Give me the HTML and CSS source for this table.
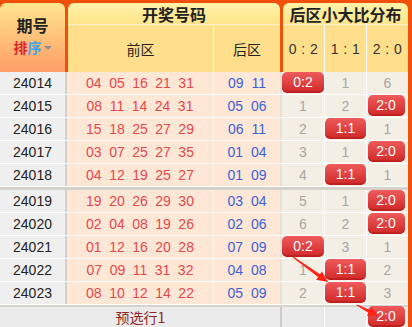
FILE: index.html
```html
<!DOCTYPE html>
<html lang="zh-CN">
<head>
<meta charset="utf-8">
<title>后区小大比分布</title>
<link rel="stylesheet" href="styles.css">
</head>
<body>
<div class="board">
  <div class="head">
    <div class="h-issue">
      <div class="h-issue-t">期号</div>
      <div class="sort"><span class="s1">排</span><span class="s2">序</span><span class="caret"></span></div>
    </div>
    <div class="h-group h-draw">
      <div class="h-title">开奖号码</div>
      <div class="h-sub"><div class="hs hs-front">前区</div><div class="hs hs-back">后区</div></div>
    </div>
    <div class="h-group h-dist">
      <div class="h-title">后区小大比分布</div>
      <div class="h-sub"><div class="hs hs-r">0 : 2</div><div class="hs hs-r">1 : 1</div><div class="hs hs-r last">2 : 0</div></div>
    </div>
  </div>

  <div class="row">
    <div class="c c-issue">24014</div>
    <div class="c c-front"><span>04</span><span>05</span><span>16</span><span>21</span><span>31</span></div>
    <div class="c c-back"><span>09</span><span>11</span></div>
    <div class="c c-r"><span class="badge">0:2</span></div>
    <div class="c c-r">1</div>
    <div class="c c-r last">6</div>
  </div>
  <div class="row">
    <div class="c c-issue">24015</div>
    <div class="c c-front"><span>08</span><span>11</span><span>14</span><span>24</span><span>31</span></div>
    <div class="c c-back"><span>05</span><span>06</span></div>
    <div class="c c-r">1</div>
    <div class="c c-r">2</div>
    <div class="c c-r last"><span class="badge">2:0</span></div>
  </div>
  <div class="row">
    <div class="c c-issue">24016</div>
    <div class="c c-front"><span>15</span><span>18</span><span>25</span><span>27</span><span>29</span></div>
    <div class="c c-back"><span>06</span><span>11</span></div>
    <div class="c c-r">2</div>
    <div class="c c-r"><span class="badge">1:1</span></div>
    <div class="c c-r last">1</div>
  </div>
  <div class="row">
    <div class="c c-issue">24017</div>
    <div class="c c-front"><span>03</span><span>07</span><span>25</span><span>27</span><span>35</span></div>
    <div class="c c-back"><span>01</span><span>04</span></div>
    <div class="c c-r">3</div>
    <div class="c c-r">1</div>
    <div class="c c-r last"><span class="badge">2:0</span></div>
  </div>
  <div class="row">
    <div class="c c-issue">24018</div>
    <div class="c c-front"><span>04</span><span>12</span><span>19</span><span>25</span><span>27</span></div>
    <div class="c c-back"><span>01</span><span>09</span></div>
    <div class="c c-r">4</div>
    <div class="c c-r"><span class="badge">1:1</span></div>
    <div class="c c-r last">1</div>
  </div>
  <div class="group-sep"></div>
  <div class="row">
    <div class="c c-issue">24019</div>
    <div class="c c-front"><span>19</span><span>20</span><span>26</span><span>29</span><span>30</span></div>
    <div class="c c-back"><span>03</span><span>04</span></div>
    <div class="c c-r">5</div>
    <div class="c c-r">1</div>
    <div class="c c-r last"><span class="badge">2:0</span></div>
  </div>
  <div class="row">
    <div class="c c-issue">24020</div>
    <div class="c c-front"><span>02</span><span>04</span><span>08</span><span>19</span><span>26</span></div>
    <div class="c c-back"><span>02</span><span>06</span></div>
    <div class="c c-r">6</div>
    <div class="c c-r">2</div>
    <div class="c c-r last"><span class="badge">2:0</span></div>
  </div>
  <div class="row">
    <div class="c c-issue">24021</div>
    <div class="c c-front"><span>01</span><span>12</span><span>16</span><span>20</span><span>28</span></div>
    <div class="c c-back"><span>07</span><span>09</span></div>
    <div class="c c-r"><span class="badge">0:2</span></div>
    <div class="c c-r">3</div>
    <div class="c c-r last">1</div>
  </div>
  <div class="row">
    <div class="c c-issue">24022</div>
    <div class="c c-front"><span>07</span><span>09</span><span>11</span><span>31</span><span>32</span></div>
    <div class="c c-back"><span>04</span><span>08</span></div>
    <div class="c c-r">1</div>
    <div class="c c-r"><span class="badge">1:1</span></div>
    <div class="c c-r last">2</div>
  </div>
  <div class="row">
    <div class="c c-issue">24023</div>
    <div class="c c-front"><span>08</span><span>10</span><span>12</span><span>14</span><span>22</span></div>
    <div class="c c-back"><span>05</span><span>09</span></div>
    <div class="c c-r">2</div>
    <div class="c c-r"><span class="badge">1:1</span></div>
    <div class="c c-r last">3</div>
  </div>

  <div class="row foot">
    <div class="c f-issue"></div>
    <div class="c f-front">预选行1</div>
    <div class="c f-back"></div>
    <div class="c f-r"></div>
    <div class="c f-r"></div>
    <div class="c f-r last"><span class="badge">2:0</span></div>
  </div>

  <svg class="arrows" width="412" height="327" viewBox="0 0 412 327" aria-hidden="true">
    <polygon points="292.65,257.49 318.12,276.9 316.1,279.7 328,282 322.0,271.5 319.98,274.3 293.35,256.51"/>
    <polygon points="356.72,305.53 368.40,312.78 366.82,315.79 378,316 371.46,306.93 369.88,309.94 357.28,304.47"/>
  </svg>
</div>
</body>
</html>
```

FILE: styles.css
```css
* { box-sizing: border-box; }

body {
  margin: 0;
  background: #ffffff;
}

.board {
  position: relative;
  width: 412px;
  height: 327px;
  overflow: hidden;
  border-right: 4px solid #f24f0a;
  font-family: "Liberation Sans", "Noto Sans CJK SC", sans-serif;
  font-size: 14px;
  background: #ffffff;
}

/* ---------- header ---------- */
.head {
  display: flex;
  gap: 3px;
  height: 72px;
  padding-top: 3px;
  background: #f24f0a;
}

.h-issue {
  width: 65px;
  border-radius: 6px 6px 0 0;
  background: linear-gradient(#ffe58e, #ff9d66);
  display: flex;
  flex-direction: column;
  align-items: center;
  padding-top: 10px;
  font-family: "Noto Sans CJK SC", sans-serif;
}

.h-issue-t {
  height: 24px;
  font-size: 16px;
  font-weight: bold;
  line-height: 24px;
  color: #222;
}

.sort {
  display: flex;
  align-items: center;
  height: 21px;
  font-size: 14px;
  font-weight: bold;
  line-height: 21px;
}

.s1 { color: #d8262b; }
.s2 { color: #3aa3f0; }

.caret {
  width: 0;
  height: 0;
  margin-left: 2px;
  border-left: 4px solid transparent;
  border-right: 4px solid transparent;
  border-top: 4px solid #8f8f8f;
}

.h-group {
  display: flex;
  flex-direction: column;
}

.h-draw { width: 212px; }
.h-dist { width: 125px; }

.h-title {
  height: 22px;
  border-radius: 6px 6px 0 0;
  border-bottom: 1px solid #fff3d2;
  background: linear-gradient(#fff3a8, #ffe48b);
  font-family: "Noto Sans CJK SC", sans-serif;
  font-size: 16px;
  font-weight: bold;
  line-height: 22px;
  text-align: center;
  color: #222;
}

.h-sub {
  flex: 1;
  display: flex;
  background: #ffdf8b;
}

.hs {
  display: flex;
  align-items: center;
  justify-content: center;
  color: #222;
  border-right: 1px solid #fff;
}

.hs-front {
  width: 146px;
  font-family: "Noto Sans CJK SC", sans-serif;
  font-size: 14px;
}

.hs-back {
  flex: 1;
  border-right: 0;
  font-family: "Noto Sans CJK SC", sans-serif;
  font-size: 14px;
}

.hs-r {
  width: 42px;
  font-size: 14px;
  letter-spacing: 0.5px;
  color: #333;
}

.hs-r.last {
  width: 41px;
  border-right: 0;
}

/* ---------- rows ---------- */
.row {
  display: grid;
  grid-template-columns: 67px 147px 68px 43px 42px 41px;
  grid-template-rows: 22px;
  padding-bottom: 1px;
  height: 23px;
  background: #ffffff;
}

.c {
  display: flex;
  align-items: center;
  justify-content: center;
  line-height: 22px;
}

.c-issue {
  background: #efefef;
  border-right: 2px solid #d3cfcb;
  color: #222;
}

.c-front {
  gap: 7.5px;
  background: #ffe7d6;
  border-right: 1px solid #ffffff;
  color: #e5484b;
}

.c-back {
  gap: 8px;
  background: #ffe7d6;
  border-right: 2px solid #e4e0da;
  color: #3c5fd6;
}

.c-r {
  background: #f4efe5;
  border-right: 1px solid #ffffff;
  color: #a6a6a6;
}

.c-r.last { border-right: 0; }

.badge {
  display: block;
  width: 100%;
  height: 21px;
  border-radius: 5px;
  background: linear-gradient(#ef5b5b, #d02828);
  box-shadow: inset 0 -2px 0 rgba(140, 0, 0, 0.25);
  color: #ffffff;
  font-size: 14px;
  line-height: 21px;
  text-align: center;
  align-self: flex-start;
}

.c-r.last .badge,
.f-r.last .badge {
  width: 37px;
  margin-right: 3px;
}

.group-sep {
  height: 3px;
  background: #d6d1cb;
}

/* ---------- footer ---------- */
.foot {
  height: 22px;
  grid-template-rows: 20px;
  padding-bottom: 0;
  border-top: 2px solid #d6d2ce;
  background: #ebebeb;
}

.f-issue { background: #ebebeb; }

.f-front {
  background: #ebebeb;
  font-family: "Noto Sans CJK SC", sans-serif;
  font-size: 14px;
  color: #8e2626;
}

.f-back {
  background: #ebebeb;
  border-right: 2px solid #cdcac7;
}

.f-r {
  background: #ebebeb;
  border-right: 1px solid #ffffff;
}

.f-r.last { border-right: 0; }

.foot .badge {
  margin-top: -1px;
}

/* ---------- overlay arrows ---------- */
.arrows {
  position: absolute;
  top: 0;
  left: 0;
  pointer-events: none;
  fill: #ff2415;
}
```
